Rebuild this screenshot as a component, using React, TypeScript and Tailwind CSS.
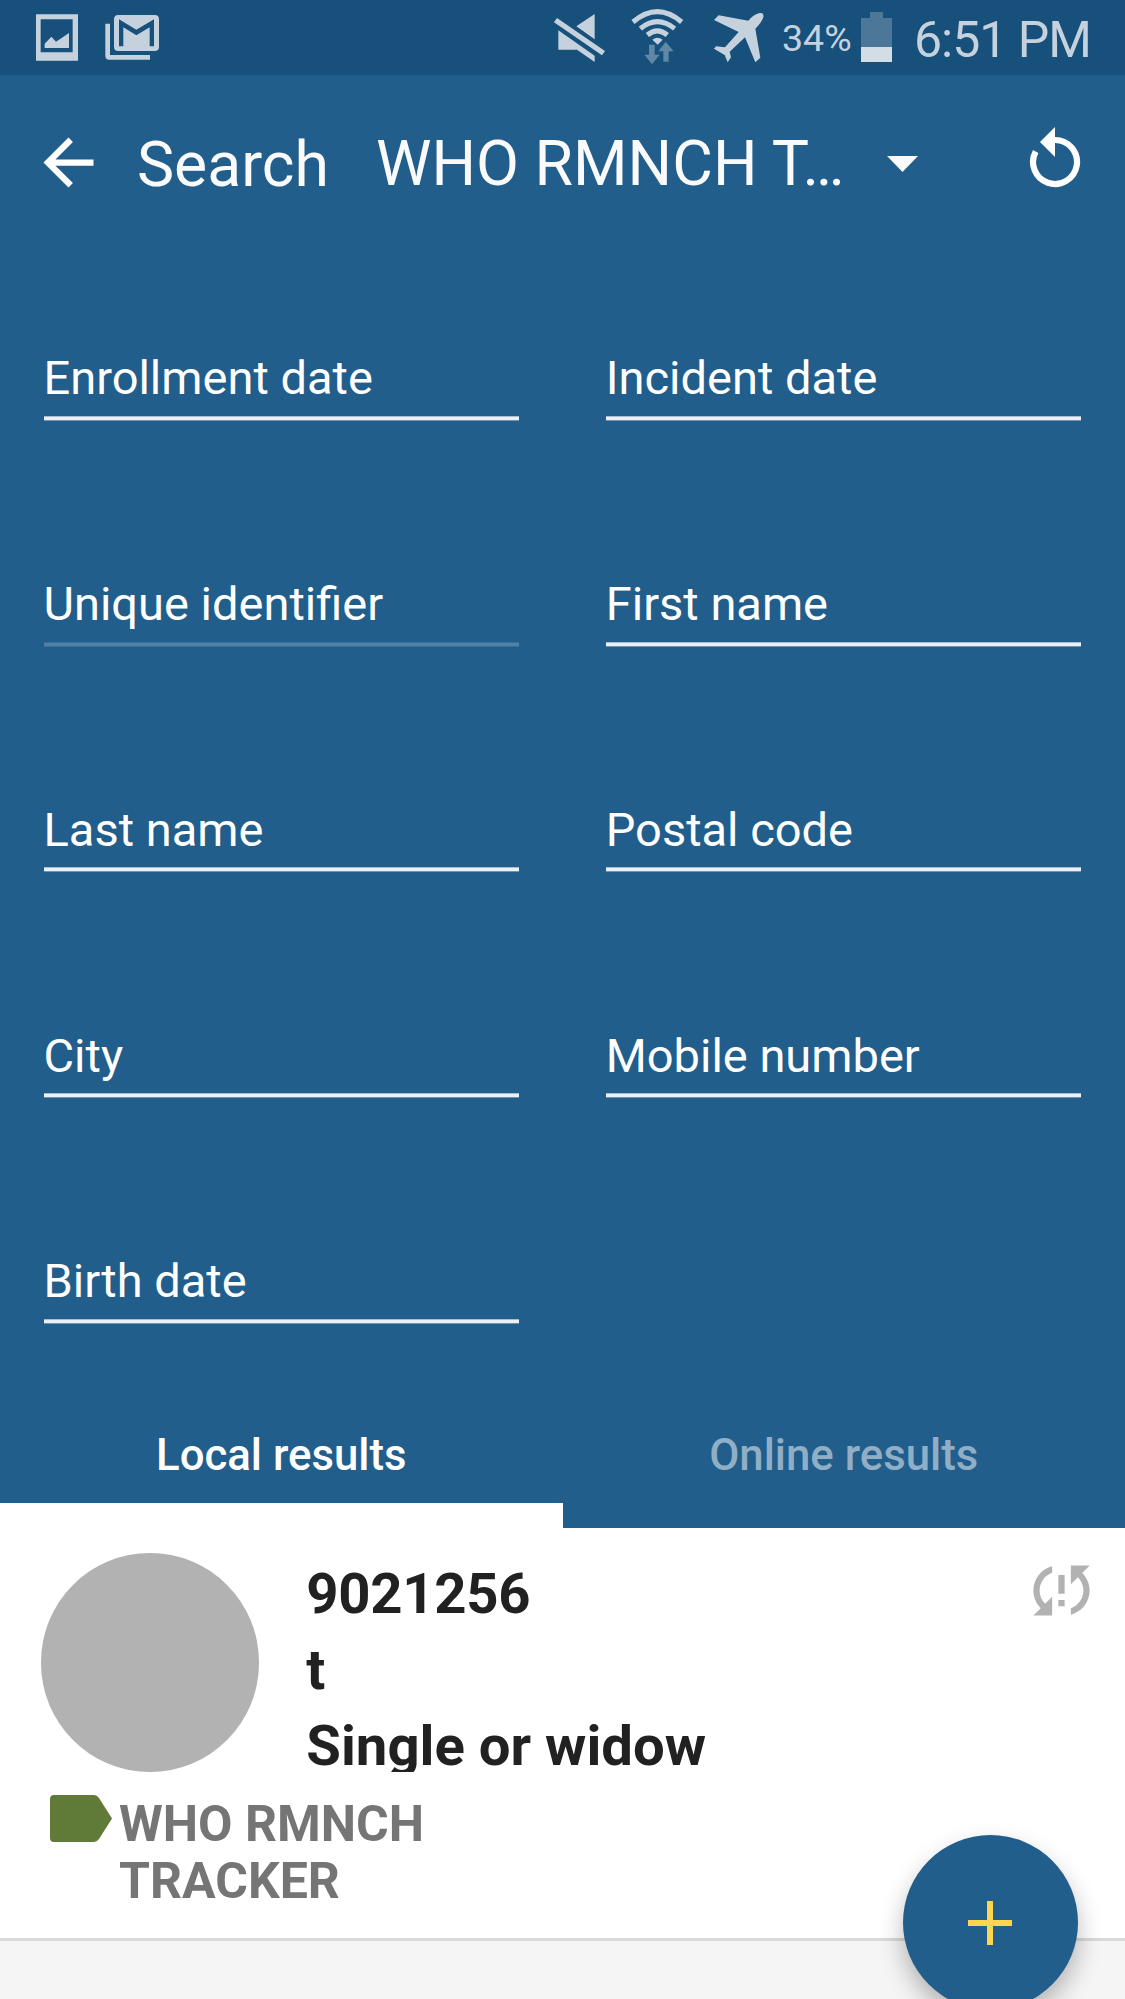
import { MdArrowBack, MdSyncProblem } from "react-icons/md";

const rows = [
  ["Enrollment date", "Incident date"],
  ["Unique identifier", "First name"],
  ["Last name", "Postal code"],
  ["City", "Mobile number"],
  ["Birth date", ""],
];

function StatusBar() {
  return (
    <div className="flex h-[75px] items-start bg-[#17507b] text-[#c5d2de]">
      <svg className="ml-9 mt-3.5 h-[47px] w-[42px] shrink-0" viewBox="108 42 126 141" fill="currentColor">
        <path fillRule="evenodd" d="M108 43H234V182H108ZM122 58V157H218V58Z" />
        <path d="M134 144V131L154 110L168 125L207 99V144Z" />
      </svg>
      <svg className="ml-[27px] mt-3.5 h-[47px] w-[54px] shrink-0" viewBox="315 42 162 141" fill="currentColor">
        <path fillRule="evenodd" d="M355 45H464Q477 45 477 58V140Q477 153 464 153H355Q342 153 342 140V58Q342 45 355 45ZM357 58V139H370V82L409 106L449 82V139H462V58L409 89Z" />
        <path d="M316 71H330V165H450V179H328Q316 179 316 167Z" />
      </svg>
      <svg className="ml-[395px] mt-3.5 h-12 w-[51px] shrink-0" viewBox="537 42 153 144" fill="currentColor">
        <path d="M659 42V118L604 79ZM550 91L659 167V186L606 149H550ZM546 54L690 153L681 166L537 67Z" />
      </svg>
      <svg className="ml-[26px] mt-2 h-[57px] w-[53px] shrink-0" viewBox="768 24 159 171" fill="none">
        <g stroke="#c5d2de" strokeWidth="15">
          <path d="M774 66Q847 4 920 66" />
          <path d="M796 86Q847 44 899 86" />
          <path d="M817 105Q847 80 877 105" />
        </g>
        <path d="M832 119Q847 107 863 119L848 134Z" fill="#c5d2de" />
        <path d="M822 134H839V164H854L831 193L808 164H822ZM872 125L896 154H881V185H865V154H850Z" fill="#5f87a6" />
      </svg>
      <svg className="ml-[29px] mt-3 h-[51px] w-[51px] shrink-0" viewBox="40 21 153 153" fill="currentColor">
        <path d="M43 45L57 31L146 47Q162 28 180 24Q194 22 191 37Q186 53 167 71L182 158L167 172L136 97L90 140L94 157L84 172L75 150L43 131L49 124L76 127L117 81Z" />
      </svg>
      <span className="ml-[18px] mt-[14px] w-[71px] whitespace-nowrap text-[37.5px] leading-[48px]">34%</span>
      <svg className="ml-2 mt-3 h-[50px] w-[31px] shrink-0" viewBox="0 0 31 50">
        <path d="M0 6H9V0H22V6H31V35H0Z" fill="#4c7799" />
        <path d="M0 35H31V50H0Z" fill="#d2dde6" />
      </svg>
      <span className="ml-[22px] mt-[10px] whitespace-nowrap text-[50px] leading-[60px] tracking-[-1px]">6:51 PM</span>
    </div>
  );
}

function Toolbar() {
  return (
    <header className="flex h-[175px] items-center text-[#fafafa]">
      <MdArrowBack className="ml-[31px] size-[75px] shrink-0 text-white" />
      <h1 className="ml-[31px] mt-[5px] w-[239px] whitespace-nowrap text-[62.5px] leading-[80px]">Search</h1>
      <div className="mt-[3px] w-[481px] whitespace-nowrap text-[62.5px] leading-[80px]">WHO RMNCH T…</div>
      <svg className="ml-[30px] mt-0.5 h-4 w-[31px] shrink-0" viewBox="0 0 31 16" fill="currentColor">
        <path d="M0 0H31L15.500 16Z" />
      </svg>
      <svg className="-mt-3 ml-[111px] h-[62px] w-[52px] shrink-0" viewBox="0 0 52 62" fill="none">
        <path d="M26 14A22 22 0 1 1 6.700 25.500" stroke="#fff" strokeWidth="6.200" />
        <path d="M26 1V31L11 16Z" fill="#fff" />
      </svg>
    </header>
  );
}

function Field({ label, dim }: { label: string; dim: boolean }) {
  return (
    <div className="flex h-[225.750px] flex-col justify-end">
      <span className="whitespace-nowrap text-[47px] leading-[60px] text-white">{label}</span>
      <div
        className={
          dim
            ? "mt-[7.500px] h-[5px] border-b border-t border-[#396f98] bg-[#5080a5]"
            : "mt-[7.500px] h-[5px] border-b border-t border-b-[#6d94b2] border-t-[#a6bed0] bg-[#eaf0f5]"
        }
      />
    </div>
  );
}

export default function App() {
  return (
    <div className="relative flex h-[1999px] w-[1125px] flex-col overflow-hidden bg-[#f5f5f5] font-['Roboto',sans-serif]">
      <StatusBar />
      <main className="flex h-[1453px] flex-col bg-[#215e8b]">
        <Toolbar />
        <form className="-mt-[55px] grid grid-cols-2 gap-x-[87px] pl-[43.500px] pr-11">
          {rows.flat().map((label, i) => (label ? <Field key={label} label={label} dim={i === 2} /> : null))}
        </form>
        <div className="mt-auto grid h-[150px] grid-cols-2 text-center text-[43.75px] font-medium leading-[56px]">
          <div className="flex flex-col">
            <span className="mt-[49px] text-white">Local results</span>
            <div className="mt-auto h-[25px] bg-white" />
          </div>
          <span className="mt-[49px] text-[#90aec5]">Online results</span>
        </div>
      </main>
      <section className="h-[413px] border-b-[3px] border-[#d9d9d9] bg-white">
        <div className="flex">
          <div className="ml-[40.600px] mt-[25px] size-[218.750px] shrink-0 rounded-full bg-[#b2b2b2]" />
          <div className="ml-[47px] mt-[25px] h-[219px] w-[600px] overflow-hidden pt-[3px] text-[56.25px] font-bold leading-[76px] text-[#212121]">
            <p className="tracking-[-0.3px]">9021256</p>
            <p>t</p>
            <p>Single or widow</p>
          </div>
          <MdSyncProblem className="ml-[118px] mt-[25px] size-[75px] shrink-0 text-[#b2b2b2]" />
        </div>
        <div className="flex">
          <svg className="ml-[50px] mt-[23px] h-[47px] w-[62px] shrink-0" viewBox="0 0 62 47">
            <path d="M4 0H44Q47 0 49 3L62 23.500L49 44Q47 47 44 47H4Q0 47 0 43V4Q0 0 4 0Z" fill="#607a38" />
          </svg>
          <p className="ml-[7px] mt-6 w-[340px] text-[50px] font-bold leading-[57px] text-[#757575]">WHO RMNCH TRACKER</p>
        </div>
      </section>
      <button className="absolute left-[902.500px] top-[1835px] grid size-[175px] place-items-center rounded-full bg-[#215e8b] shadow-[0_12px_24px_rgba(0,0,0,0.28)]">
        <svg className="size-11" viewBox="0 0 44 44" fill="#ffd54f">
          <path d="M19 0H25V19H44V25H25V44H19V25H0V19H19Z" />
        </svg>
      </button>
    </div>
  );
}
